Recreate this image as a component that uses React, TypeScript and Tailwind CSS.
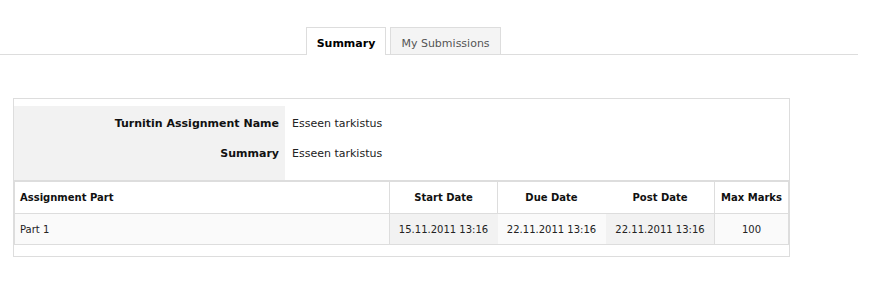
export default function App() {
  const headers = [
    { label: "Assignment Part", cls: "justify-start pl-[5px] border-r border-[#dddddd]" },
    { label: "Start Date", cls: "justify-center border-r border-[#dddddd]" },
    { label: "Due Date", cls: "justify-center border-r border-transparent" },
    { label: "Post Date", cls: "justify-center border-r border-[#dddddd]" },
    { label: "Max Marks", cls: "justify-center" },
  ];
  const cells = [
    { value: "Part 1", cls: "justify-start pl-[5px] bg-[#fafafa] border-r border-[#dddddd]" },
    { value: "15.11.2011 13:16", cls: "justify-center bg-[#f2f2f2] border-r border-transparent" },
    { value: "22.11.2011 13:16", cls: "justify-center bg-[#fafafa] border-r border-transparent" },
    { value: "22.11.2011 13:16", cls: "justify-center bg-[#f2f2f2] border-r border-[#dddddd]" },
    { value: "100", cls: "justify-center bg-[#fafafa]" },
  ];

  return (
    <div className="w-[871px] h-[284px] bg-white text-[#222222] font-['DejaVu_Sans',sans-serif] pt-[27px]">
      {/* tabs */}
      <div className="w-[858px] h-[28px] border-b border-[#dddddd] flex items-start gap-[4px] pl-[306px]">
        <div className="w-[80px] h-[28px] bg-white border-x border-t border-[#dddddd] flex justify-center pt-[9px] text-[11px] leading-[13px] font-bold text-black">
          Summary
        </div>
        <div className="w-[111px] h-[27px] bg-[#f4f4f4] border-x border-t border-[#dddddd] flex justify-center pt-[9px] text-[11px] leading-[13px] text-[#555555]">
          My Submissions
        </div>
      </div>

      {/* summary box */}
      <div className="mt-[43px] ml-[13px] w-[777px] border border-[#dddddd] pt-[7px] pb-[11px]">
        <div className="flex text-[11px]">
          <div className="w-[271px] bg-[#f2f2f2] pt-[3px] pb-[11px] font-bold text-[#111111]">
            <div className="h-[30px] flex items-center justify-end pr-[6px]">Turnitin Assignment Name</div>
            <div className="h-[30px] flex items-center justify-end pr-[6px]">Summary</div>
          </div>
          <div className="flex-1 pt-[3px] pl-[7px]">
            <div className="h-[30px] flex items-center">Esseen tarkistus</div>
            <div className="h-[30px] flex items-center">Esseen tarkistus</div>
          </div>
        </div>

        <div className="border-t-2 border-[#dddddd]">
          <div className="border-x border-[#dddddd] text-[10px]">
            <div className="grid grid-cols-[375px_108px_108px_109px_73px] h-[32px] border-b border-[#dddddd] font-bold text-[#111111]">
              {headers.map((h) => (
                <div key={h.label} className={`flex items-center ${h.cls}`}>{h.label}</div>
              ))}
            </div>
            <div className="grid grid-cols-[375px_108px_108px_109px_73px] h-[31px] border-b border-[#dddddd]">
              {cells.map((c, i) => (
                <div key={i} className={`flex items-center ${c.cls}`}>{c.value}</div>
              ))}
            </div>
          </div>
        </div>
      </div>
    </div>
  );
}
